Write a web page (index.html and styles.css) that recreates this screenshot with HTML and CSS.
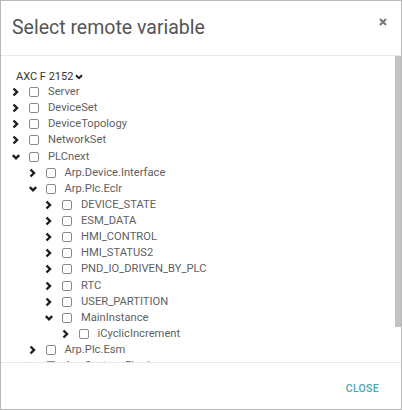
FILE: index.html
```html
<!DOCTYPE html>
<html>
<head>
<meta charset="utf-8">
<link rel="stylesheet" href="styles.css">
</head>
<body>
<div class="dialog">
  <div class="header">
    <div class="title">Select remote variable</div>
    <button class="close-x" aria-label="close">
      <svg width="8" height="8" viewBox="0 0 8 8"><path d="M1 1 L7 7 M7 1 L1 7" stroke="#777" stroke-width="2" stroke-linecap="butt"/></svg>
    </button>
  </div>
  <div class="body">
    <div class="content">
      <div class="device">AXC F 2152<svg class="dd" width="8" height="6" viewBox="0 0 8 6"><polyline points="1,1.2 4,4.2 7,1.2" fill="none" stroke="#222" stroke-width="2"/></svg></div>
      <div class="tree">
        <div class="row l0"><span class="tg"><svg viewBox="0 0 8 10"><polyline points="1.5,1.5 5,5 1.5,8.5" /></svg></span><span class="cb"></span><span class="lbl">Server</span></div>
        <div class="row l0"><span class="tg"><svg viewBox="0 0 8 10"><polyline points="1.5,1.5 5,5 1.5,8.5" /></svg></span><span class="cb"></span><span class="lbl">DeviceSet</span></div>
        <div class="row l0"><span class="tg"><svg viewBox="0 0 8 10"><polyline points="1.5,1.5 5,5 1.5,8.5" /></svg></span><span class="cb"></span><span class="lbl">DeviceTopology</span></div>
        <div class="row l0"><span class="tg"><svg viewBox="0 0 8 10"><polyline points="1.5,1.5 5,5 1.5,8.5" /></svg></span><span class="cb"></span><span class="lbl">NetworkSet</span></div>
        <div class="row l0"><span class="tg"><svg viewBox="0 0 8 10"><polyline points="0.8,3.2 4,6.4 7.2,3.2" /></svg></span><span class="cb"></span><span class="lbl">PLCnext</span></div>
        <div class="row l1"><span class="tg"><svg viewBox="0 0 8 10"><polyline points="1.5,1.5 5,5 1.5,8.5" /></svg></span><span class="cb"></span><span class="lbl">Arp.Device.Interface</span></div>
        <div class="row l1"><span class="tg"><svg viewBox="0 0 8 10"><polyline points="0.8,3.2 4,6.4 7.2,3.2" /></svg></span><span class="cb"></span><span class="lbl">Arp.Plc.Eclr</span></div>
        <div class="row l2"><span class="tg"><svg viewBox="0 0 8 10"><polyline points="1.5,1.5 5,5 1.5,8.5" /></svg></span><span class="cb"></span><span class="lbl">DEVICE_STATE</span></div>
        <div class="row l2"><span class="tg"><svg viewBox="0 0 8 10"><polyline points="1.5,1.5 5,5 1.5,8.5" /></svg></span><span class="cb"></span><span class="lbl">ESM_DATA</span></div>
        <div class="row l2"><span class="tg"><svg viewBox="0 0 8 10"><polyline points="1.5,1.5 5,5 1.5,8.5" /></svg></span><span class="cb"></span><span class="lbl">HMI_CONTROL</span></div>
        <div class="row l2"><span class="tg"><svg viewBox="0 0 8 10"><polyline points="1.5,1.5 5,5 1.5,8.5" /></svg></span><span class="cb"></span><span class="lbl">HMI_STATUS2</span></div>
        <div class="row l2"><span class="tg"><svg viewBox="0 0 8 10"><polyline points="1.5,1.5 5,5 1.5,8.5" /></svg></span><span class="cb"></span><span class="lbl">PND_IO_DRIVEN_BY_PLC</span></div>
        <div class="row l2"><span class="tg"><svg viewBox="0 0 8 10"><polyline points="1.5,1.5 5,5 1.5,8.5" /></svg></span><span class="cb"></span><span class="lbl">RTC</span></div>
        <div class="row l2"><span class="tg"><svg viewBox="0 0 8 10"><polyline points="1.5,1.5 5,5 1.5,8.5" /></svg></span><span class="cb"></span><span class="lbl">USER_PARTITION</span></div>
        <div class="row l2"><span class="tg"><svg viewBox="0 0 8 10"><polyline points="0.8,3.2 4,6.4 7.2,3.2" /></svg></span><span class="cb"></span><span class="lbl">MainInstance</span></div>
        <div class="row l3"><span class="tg"><svg viewBox="0 0 8 10"><polyline points="1.5,1.5 5,5 1.5,8.5" /></svg></span><span class="cb"></span><span class="lbl">iCyclicIncrement</span></div>
        <div class="row l1"><span class="tg"><svg viewBox="0 0 8 10"><polyline points="1.5,1.5 5,5 1.5,8.5" /></svg></span><span class="cb"></span><span class="lbl">Arp.Plc.Esm</span></div>
        <div class="row l1"><span class="tg"><svg viewBox="0 0 8 10"><polyline points="1.5,1.5 5,5 1.5,8.5" /></svg></span><span class="cb"></span><span class="lbl">Arp.System.Ehmi</span></div>
      </div>
    </div>
    <div class="scrollbar"><div class="thumb"></div></div>
  </div>
  <div class="footer">
    <button class="close-btn">CLOSE</button>
  </div>
</div>
</body>
</html>
```
FILE: styles.css
```css
* { box-sizing: border-box; }
html, body { margin: 0; padding: 0; background: #fff; }
body { font-family: Roboto, "Noto Sans", Arial, sans-serif; }

.dialog {
  width: 402px;
  height: 410px;
  border: 1px solid #b8b8b8;
  display: flex;
  flex-direction: column;
  background: #fff;
}

.header {
  height: 55px;
  flex: none;
  border-bottom: 1px solid #e8e8e8;
  display: flex;
  align-items: center;
  justify-content: space-between;
  padding: 0 14px 0 11px;
}
.title {
  font-size: 19.5px;
  color: #555;
  font-weight: 400;
  padding-bottom: 1px;
}
.close-x {
  align-self: flex-start;
  margin-top: 17px;
  border: 0;
  background: none;
  padding: 0;
  width: 8px;
  height: 8px;
  display: block;
}
.close-x svg { display: block; }

.body {
  flex: 1;
  min-height: 0;
  display: flex;
}
.content {
  flex: 1;
  overflow: hidden;
  padding: 12px 0 0 11px;
}
.scrollbar {
  width: 6px;
  flex: none;
  background: #fff;
}
.thumb {
  height: 271px;
  background: #c3c3c3;
}

.device {
  height: 16px;
  display: flex;
  align-items: center;
  font-size: 11px;
  color: #333;
  padding-left: 4px;
}
.device .dd { margin-left: 2px; margin-top: 1px; }

.row {
  height: 16.125px;
  display: flex;
  align-items: center;
  font-size: 11.2px;
  color: #5f5f5f;
  white-space: nowrap;
}
.row.l1 { padding-left: 16.5px; }
.row.l2 { padding-left: 33px; }
.row.l3 { padding-left: 49.5px; }

.tg {
  width: 17px;
  flex: none;
  display: flex;
  align-items: center;
}
.tg svg {
  width: 8px;
  height: 10px;
  display: block;
}
.tg polyline {
  fill: none;
  stroke: #1e1e1e;
  stroke-width: 2.4;
}
.cb {
  width: 10px;
  height: 10px;
  flex: none;
  border: 1px solid #8a8a8a;
  border-radius: 2px;
  margin-right: 9px;
}
.lbl { line-height: 16px; }

.footer {
  flex: none;
  height: 47px;
  border-top: 1px solid #e8e8e8;
  display: flex;
  align-items: center;
  justify-content: flex-end;
  padding: 4px 22px 0 0;
}
.close-btn {
  border: 0;
  background: none;
  padding: 0;
  font-family: Roboto, "Noto Sans", Arial, sans-serif;
  font-size: 10.5px;
  font-weight: 500;
  color: #4aa6b0;
  letter-spacing: 0.3px;
}
```
